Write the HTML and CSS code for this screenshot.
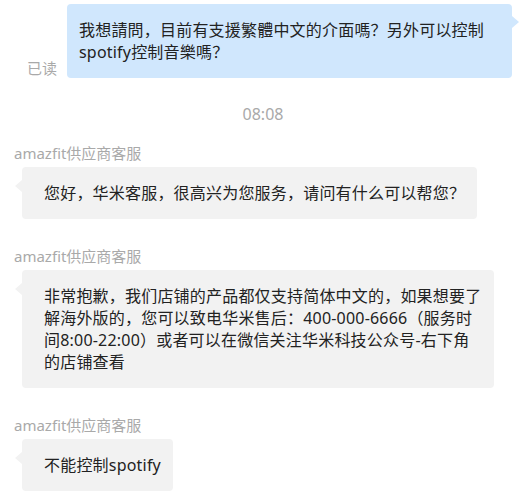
FILE: index.html
```html
<!DOCTYPE html>
<html lang="zh">
<head>
<meta charset="utf-8">
<link rel="stylesheet" href="styles.css">
</head>
<body>
<div class="chat">
  <div class="row-out">
    <span class="read">已读</span>
    <div class="bubble bubble-out">我想請問，目前有支援繁體中文的介面嗎？另外可以控制spotify控制音樂嗎？</div>
  </div>
  <div class="time">08:08</div>
  <div class="msg first">
    <div class="name">amazfit供应商客服</div>
    <div class="bubble bubble-in">您好，华米客服，很高兴为您服务，请问有什么可以帮您？</div>
  </div>
  <div class="msg">
    <div class="name">amazfit供应商客服</div>
    <div class="bubble bubble-in">非常抱歉，我们店铺的产品都仅支持简体中文的，如果想要了解海外版的，您可以致电华米售后：400-000-6666（服务时间8:00-22:00）或者可以在微信关注华米科技公众号-右下角的店铺查看</div>
  </div>
  <div class="msg">
    <div class="name">amazfit供应商客服</div>
    <div class="bubble bubble-in">不能控制spotify</div>
  </div>
</div>
</body>
</html>
```

FILE: styles.css
```css
html, body {
  margin: 0;
  padding: 0;
  background: #ffffff;
}

body {
  font-family: "Noto Sans", "Noto Sans CJK SC", sans-serif;
  color: #222222;
}

.chat {
  display: flex;
  flex-direction: column;
  padding: 4px 10px 0 14px;
}

.row-out {
  display: flex;
  justify-content: flex-end;
  align-items: flex-end;
  gap: 10px;
}

.read {
  font-size: 15px;
  line-height: 20px;
  color: #a9a9a9;
}

.bubble {
  position: relative;
  box-sizing: border-box;
  font-size: 16px;
  letter-spacing: 0.2px;
  line-height: 22px;
  border-radius: 4px;
  word-break: break-all;
}

.bubble::before {
  content: "";
  position: absolute;
  top: 12px;
  width: 0;
  height: 0;
  border-top: 6px solid transparent;
  border-bottom: 6px solid transparent;
}

.bubble-out {
  background: #d0e7fd;
  padding: 15px 22px 15px 12px;
  max-width: 445px;
}

.bubble-out::before {
  right: -7px;
  border-left: 7px solid #d0e7fd;
}

.bubble-in {
  align-self: flex-start;
  background: #f2f2f2;
  padding: 15px 12px 15px 22px;
  max-width: 472px;
  margin-left: 8px;
  margin-top: 4px;
}

.bubble-in::before {
  left: -7px;
  top: 13px;
  border-right: 7px solid #f2f2f2;
}

.time {
  margin-top: 25px;
  text-align: center;
  font-size: 16px;
  line-height: 22px;
  color: #a9a9a9;
}

.msg {
  display: flex;
  flex-direction: column;
  margin-top: 27px;
}

.msg.first {
  margin-top: 18px;
}

.name {
  font-size: 15px;
  line-height: 20px;
  color: #a9a9a9;
}
```
